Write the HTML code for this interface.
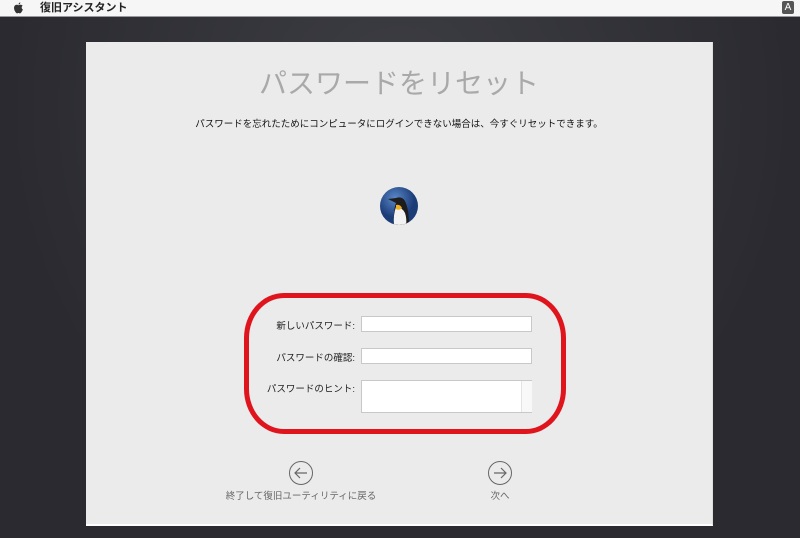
<!DOCTYPE html>
<html><head><meta charset="utf-8"><style>
body{margin:0;width:800px;height:538px;overflow:hidden;background:radial-gradient(ellipse at 50% 20%,#3d3e44,#2a2a30 70%);font-family:"Liberation Sans","Noto Sans CJK JP",sans-serif;position:relative}
.menu{position:absolute;left:0;top:0;width:800px;height:16px;background:#f6f6f6;border-bottom:1px solid #999;font-size:11px;line-height:16px}
.panel{position:absolute;left:86px;top:42px;width:626px;height:482px;background:#ebebeb;border-bottom:2px solid #fff;border-right:1px solid #ddd}
.abs{position:absolute}
.lbl{position:absolute;right:445px;font-size:9.5px;color:#222;white-space:nowrap}
.inp{position:absolute;left:361px;width:171px;background:#fff;border:1px solid #c8c8c8;box-sizing:border-box}
</style></head><body>
<div class="menu"><svg class="abs" style="left:13px;top:2px" width="11" height="12" viewBox="0 0 11 12"><path d="M5.5 3.2C4.6 2.6 3.2 2.5 2.2 3.2 0.6 4.3 0.8 7.2 2 9.2 2.8 10.6 3.7 11.7 4.7 11.2 5.2 11 5.8 11 6.3 11.2 7.3 11.7 8.2 10.6 9 9.2 9.4 8.5 9.7 8 9.9 7.4 8.4 6.7 8.3 4.5 9.6 3.7 8.6 2.4 6.9 2.5 5.5 3.2Z M5.6 2.6C5.5 1.5 6.3 0.5 7.3 0.4 7.4 1.5 6.6 2.5 5.6 2.6Z" fill="#333"/></svg><span class="abs" style="left:40px;font-weight:bold;color:#222">復旧アシスタント</span>
<span class="abs" style="left:782px;top:1px;width:12px;height:13px;background:#555;color:#fff;font-size:10px;line-height:13px;text-align:center;border-radius:2px">A</span></div>
<div class="panel">
<div class="abs" style="left:0;width:626px;top:20px;text-align:center;font-size:28px;color:#a9a9a9">パスワードをリセット</div>
<div class="abs" style="left:0;width:626px;top:74px;text-align:center;font-size:9.5px;color:#111">パスワードを忘れたためにコンピュータにログインできない場合は、今すぐリセットできます。</div>
<svg class="abs" style="left:294px;top:145px" width="38" height="38" viewBox="0 0 38 38"><defs><clipPath id="c"><circle cx="19" cy="19" r="19"/></clipPath><radialGradient id="g" cx="40%" cy="30%"><stop offset="0" stop-color="#5a88c8"/><stop offset="1" stop-color="#1c3c78"/></radialGradient></defs><g clip-path="url(#c)"><rect width="38" height="38" fill="url(#g)"/><path d="M8 12 L16 11 Q22 9 25 14 Q29 22 29 38 L14 38 Q13 24 16 16 Z" fill="#1d1d1d"/><path d="M16 20 Q22 20 25 26 Q27 32 26 38 L14 38 Q13 28 16 20Z" fill="#f2f2f2"/><path d="M16 18 Q20 17 22 21 Q19 24 16 22Z" fill="#f0b020"/></g></svg>
</div>
<div class="lbl" style="top:318px">新しいパスワード:</div>
<div class="lbl" style="top:350px">パスワードの確認:</div>
<div class="lbl" style="top:381px">パスワードのヒント:</div>
<div class="inp" style="top:316px;height:16px"></div>
<div class="inp" style="top:348px;height:16px"></div>
<div class="inp" style="top:380px;height:33px"><div class="abs" style="left:159px;top:0;width:10px;height:31px;border-left:1px solid #e4e4e4;background:#f8f8f8"></div></div>
<div class="abs" style="left:244px;top:293px;width:312px;height:131px;border:5px solid #e0141c;border-radius:40px/45px"></div>
<svg class="abs" style="left:288px;top:460px" width="26" height="26" viewBox="0 0 26 26"><circle cx="13" cy="13" r="11.5" fill="none" stroke="#666" stroke-width="1"/><path d="M19 13H7M12 8l-5 5 5 5" fill="none" stroke="#666" stroke-width="1.2"/></svg>
<svg class="abs" style="left:487px;top:460px" width="26" height="26" viewBox="0 0 26 26"><circle cx="13" cy="13" r="11.5" fill="none" stroke="#666" stroke-width="1"/><path d="M7 13h12M14 8l5 5-5 5" fill="none" stroke="#666" stroke-width="1.2"/></svg>
<div class="abs" style="left:200px;width:202px;top:488px;text-align:center;font-size:9.5px;color:#666">終了して復旧ユーティリティに戻る</div>
<div class="abs" style="left:450px;width:100px;top:488px;text-align:center;font-size:9.5px;color:#666">次へ</div>
</body></html>
